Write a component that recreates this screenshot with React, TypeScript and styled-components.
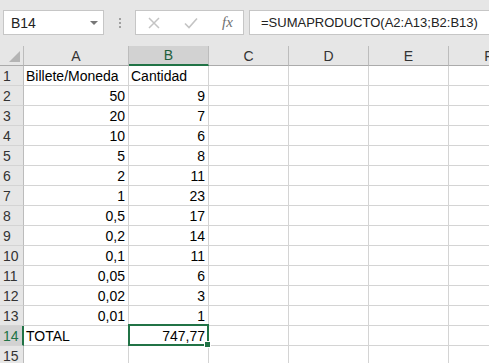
import React from 'react';
import styled, { createGlobalStyle, css } from 'styled-components';

const GlobalStyle = createGlobalStyle`
  html, body {
    margin: 0;
    padding: 0;
    overflow: hidden;
    background: #ffffff;
  }
`;

const Page = styled.div`
  width: 489px;
  height: 363px;
  overflow: hidden;
  font-family: "Liberation Sans", Arial, sans-serif;
  color: #000;
`;

const Toolbar = styled.div`
  height: 46px;
  background: #e6e6e6;
  display: flex;
  align-items: flex-start;
  padding: 10px 0 0 3px;
  box-sizing: border-box;
`;

const NameBox = styled.div`
  width: 101px;
  height: 25px;
  box-sizing: border-box;
  background: #fff;
  border: 1px solid #c6c6c6;
  display: flex;
  align-items: center;
  justify-content: space-between;
  padding: 0 5px 0 7px;
  font-size: 14px;
  color: #222;
`;

const DropArrow = styled.span`
  width: 0;
  height: 0;
  border-left: 4px solid transparent;
  border-right: 4px solid transparent;
  border-top: 4px solid #777;
`;

const Grip = styled.div`
  width: 31px;
  height: 25px;
  display: flex;
  flex-direction: column;
  align-items: center;
  justify-content: center;
  gap: 2px;

  span {
    width: 2px;
    height: 2px;
    background: #a0a0a0;
  }
`;

const FxButtons = styled.div`
  width: 109px;
  height: 25px;
  box-sizing: border-box;
  background: #fff;
  border: 1px solid #c6c6c6;
  display: flex;
  align-items: center;
  padding-left: 12px;
  gap: 24px;
`;

const FxLabel = styled.span`
  font-family: "Liberation Serif", "Times New Roman", serif;
  font-style: italic;
  font-size: 15px;
  color: #707070;
`;

const FormulaInput = styled.div`
  flex: 1;
  height: 25px;
  margin-left: 5px;
  box-sizing: border-box;
  background: #fff;
  border: 1px solid #c6c6c6;
  border-right: none;
  display: flex;
  align-items: center;
  padding-left: 11px;
  font-size: 13px;
  color: #222;
  white-space: nowrap;
`;

const Sheet = styled.div`
  display: grid;
  grid-template-columns: 24px 105px repeat(4, 80px) 80px;
  grid-auto-rows: 20px;
  font-size: 14px;
`;

const Corner = styled.div`
  background: #e6e6e6;
  border-right: 1px solid #bcbcbc;
  border-bottom: 1px solid #ababab;
  box-sizing: border-box;
  display: flex;
  align-items: flex-end;
  justify-content: flex-end;
  padding: 0 3px 3px 0;
`;

const ColHead = styled.div<{ $active?: boolean }>`
  background: #e6e6e6;
  box-sizing: border-box;
  border-right: 1px solid #bcbcbc;
  border-bottom: 1px solid #ababab;
  display: flex;
  align-items: center;
  justify-content: center;
  color: #333;
  ${p => p.$active && css`
    background: #d2d2d2;
    border-bottom: 2px solid #217346;
    color: #1e5e3b;
  `}
`;

const RowHead = styled.div<{ $active?: boolean }>`
  background: #e6e6e6;
  box-sizing: border-box;
  border-right: 1px solid #bcbcbc;
  border-bottom: 1px solid #d4d4d4;
  display: flex;
  align-items: center;
  padding-left: 3px;
  color: #333;
  ${p => p.$active && css`
    background: #d2d2d2;
    border-right: 2px solid #217346;
    color: #217346;
  `}
`;

const Cell = styled.div<{ $num?: boolean; $selected?: boolean }>`
  position: relative;
  box-sizing: border-box;
  border-right: 1px solid #d4d4d4;
  border-bottom: 1px solid #d4d4d4;
  display: flex;
  align-items: center;
  justify-content: ${p => (p.$num ? 'flex-end' : 'flex-start')};
  padding: 1px 3px 0 2px;
  white-space: nowrap;
  ${p => p.$selected && css`
    &::after {
      content: '';
      position: absolute;
      left: -1px;
      top: -2px;
      right: -1px;
      bottom: -1px;
      border: 2px solid #217346;
    }
  `}
`;

const Handle = styled.span`
  position: absolute;
  right: -3px;
  bottom: -3px;
  width: 5px;
  height: 5px;
  background: #217346;
  border: 1px solid #fff;
  z-index: 2;
`;

type Row = [string, string];

const rows: Row[] = [
  ['Billete/Moneda', 'Cantidad'],
  ['50', '9'],
  ['20', '7'],
  ['10', '6'],
  ['5', '8'],
  ['2', '11'],
  ['1', '23'],
  ['0,5', '17'],
  ['0,2', '14'],
  ['0,1', '11'],
  ['0,05', '6'],
  ['0,02', '3'],
  ['0,01', '1'],
  ['TOTAL', '747,77'],
  ['', ''],
];

const cols = ['A', 'B', 'C', 'D', 'E', 'F'];

const App: React.FC = () => {
  return (
    <Page>
      <GlobalStyle />
      <Toolbar>
        <NameBox>
          <span>B14</span>
          <DropArrow />
        </NameBox>
        <Grip>
          <span />
          <span />
          <span />
        </Grip>
        <FxButtons>
          <svg width="12" height="12" viewBox="0 0 12 12">
            <path d="M1 1L11 11M11 1L1 11" stroke="#c4c4c4" strokeWidth="1.5" />
          </svg>
          <svg width="14" height="12" viewBox="0 0 14 12">
            <path d="M1 6.5L5 10.5L13 1.5" stroke="#c4c4c4" strokeWidth="1.6" fill="none" />
          </svg>
          <FxLabel>fx</FxLabel>
        </FxButtons>
        <FormulaInput>=SUMAPRODUCTO(A2:A13;B2:B13)</FormulaInput>
      </Toolbar>
      <Sheet>
        <Corner>
          <svg width="11" height="11" viewBox="0 0 11 11">
            <polygon points="11,0 11,11 0,11" fill="#b4b4b4" />
          </svg>
        </Corner>
        {cols.map(c => (
          <ColHead key={c} $active={c === 'B'}>{c}</ColHead>
        ))}
        {rows.map((r, i) => {
          const n = i + 1;
          const isTotal = n === 14;
          const isHeader = n === 1;
          const aNum = !isHeader && !isTotal && r[0] !== '';
          const bNum = !isHeader && r[1] !== '';
          return (
            <React.Fragment key={n}>
              <RowHead $active={isTotal}>{n}</RowHead>
              <Cell $num={aNum}>{r[0]}</Cell>
              <Cell $num={bNum} $selected={isTotal}>
                {r[1]}
                {isTotal && <Handle />}
              </Cell>
              <Cell />
              <Cell />
              <Cell />
              <Cell />
            </React.Fragment>
          );
        })}
      </Sheet>
    </Page>
  );
};

export default App;
